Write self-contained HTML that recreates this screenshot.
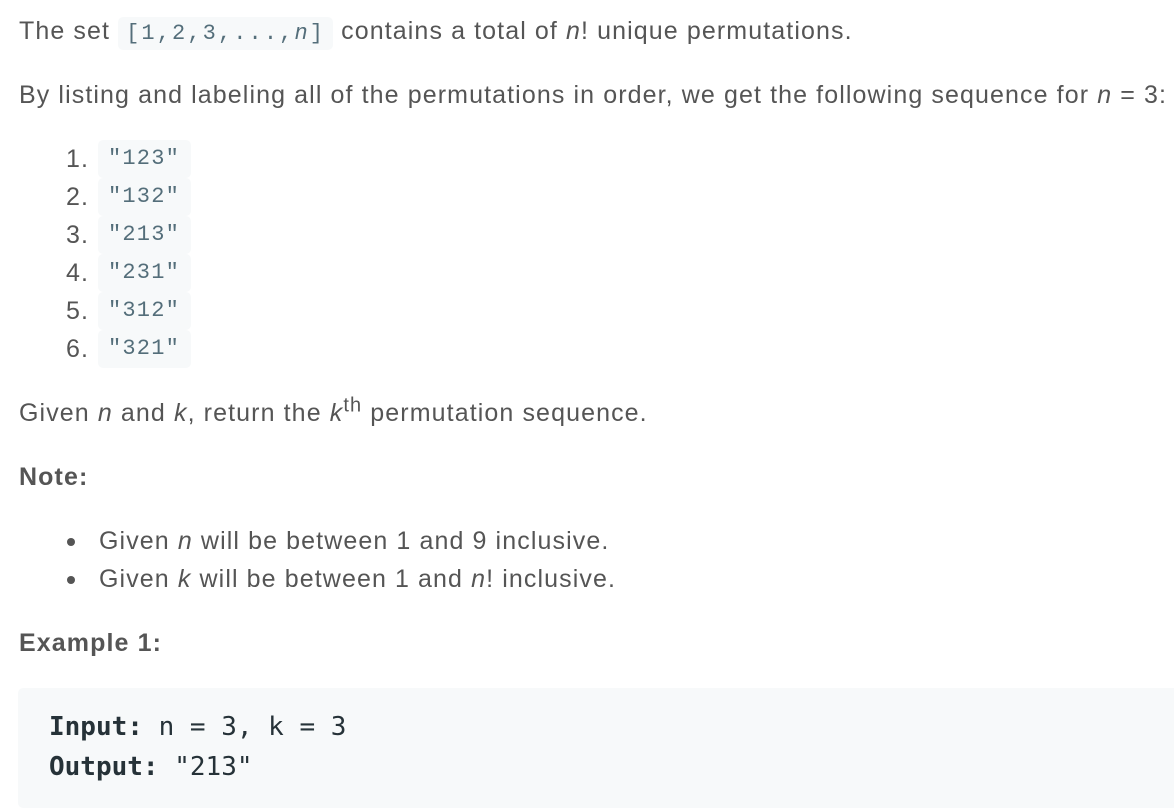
<!DOCTYPE html>
<html><head><style>
body{margin:0;width:1174px;height:808px;overflow:hidden;background:#fff;font-family:"Liberation Sans",sans-serif;font-size:25px;letter-spacing:1.1px;color:#555;}
.l{position:absolute;white-space:nowrap;line-height:30px;}
code{font-family:"Liberation Mono",monospace;font-size:22px;color:#546e7a;background:#f7f9fa;border-radius:5px;padding:4px 8px;letter-spacing:2.1px;}
.num{position:absolute;left:66px;}
.c{position:absolute;left:98px;top:-4px;height:38px;width:83px;background:#f7f9fa;border-radius:5px;font-family:"Liberation Mono",monospace;font-size:22px;color:#546e7a;line-height:38px;padding-left:10px;letter-spacing:1.2px;}
b{color:#555;}
.dot{position:absolute;left:67px;top:12px;width:8px;height:8px;border-radius:50%;background:#555;}
pre{position:absolute;left:18px;top:688px;width:1170px;height:120px;margin:0;background:#f7f9fa;border-radius:5px;font-family:"DejaVu Sans Mono","Liberation Mono",monospace;font-size:26px;letter-spacing:0;color:#263238;}
pre div{position:absolute;left:31px;}
</style></head><body>
<div class="l" style="left:19px;top:16px">The set <code>[1,2,3,...,<i>n</i>]</code> contains a total of <i>n</i>! unique permutations.</div>
<div class="l" style="left:19px;top:80px">By listing and labeling all of the permutations in order, we get the following sequence for <i>n</i> = 3:</div>
<div class="l" style="left:0;top:144px;width:300px;height:30px"><span class="num">1.</span><span class="c">"123"</span></div>
<div class="l" style="left:0;top:182px;width:300px;height:30px"><span class="num">2.</span><span class="c">"132"</span></div>
<div class="l" style="left:0;top:220px;width:300px;height:30px"><span class="num">3.</span><span class="c">"213"</span></div>
<div class="l" style="left:0;top:258px;width:300px;height:30px"><span class="num">4.</span><span class="c">"231"</span></div>
<div class="l" style="left:0;top:296px;width:300px;height:30px"><span class="num">5.</span><span class="c">"312"</span></div>
<div class="l" style="left:0;top:334px;width:300px;height:30px"><span class="num">6.</span><span class="c">"321"</span></div>
<div class="l" style="left:19px;top:398px">Given <i>n</i> and <i>k</i>, return the <i>k</i><sup style="font-size:20px;line-height:0">th</sup> permutation sequence.</div>
<div class="l" style="left:19px;top:462px"><b>Note:</b></div>
<div class="l" style="left:0;top:526px;width:700px;height:30px"><span class="dot"></span><span style="position:absolute;left:99px">Given <i>n</i> will be between 1 and 9 inclusive.</span></div>
<div class="l" style="left:0;top:564px;width:700px;height:30px"><span class="dot"></span><span style="position:absolute;left:99px">Given <i>k</i> will be between 1 and <i>n</i>! inclusive.</span></div>
<div class="l" style="left:19px;top:628px"><b>Example 1:</b></div>
<pre><div style="top:24px"><b style="color:#263238">Input:</b> n = 3, k = 3</div><div style="top:64px"><b style="color:#263238">Output:</b> "213"</div></pre>
</body></html>
